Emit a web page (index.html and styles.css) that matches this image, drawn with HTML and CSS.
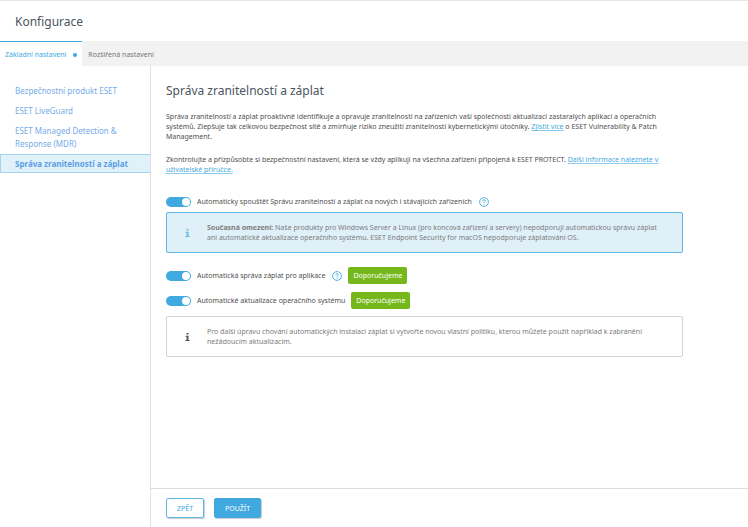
FILE: index.html
```
<!DOCTYPE html>
<html lang="cs">
    <head>
        <meta charset="utf-8" />
        <title>Konfigurace</title>
        <link rel="stylesheet" href="styles.css">
    </head>

    <body>
        <header class="header">
            <h1>Konfigurace</h1>
        </header>

        <nav class="tabs">
            <a href="#" class="tab active">Základní nastavení <span class="dot"></span></a>
            <a href="#" class="tab">Rozšířená nastavení</a>
        </nav>

        <div class="main">
            <nav class="sidebar">
                <a href="#">Bezpečnostní produkt ESET</a>
                <a href="#">ESET LiveGuard</a>
                <a href="#">ESET Managed Detection &amp; Response (MDR)</a>
                <a href="#" class="selected">Správa zranitelností a záplat</a>
            </nav>

            <div class="panel">
                <main class="content">
                    <h2>Správa zranitelností a záplat</h2>
                    <p>Správa zranitelností a záplat proaktivně identifikuje a opravuje zranitelnosti na zařízeních vaší společnosti aktualizací zastaralých aplikací a operačních<br>systémů. Zlepšuje tak celkovou bezpečnost sítě a zmírňuje riziko zneužití zranitelností kybernetickými útočníky. <a href="#">Zjistit více</a> o ESET Vulnerability &amp; Patch<br>Management.</p>
                    <p>Zkontrolujte a přizpůsobte si bezpečnostní nastavení, která se vždy aplikují na všechna zařízení připojená k ESET PROTECT. <a href="#">Další informace naleznete v<br>uživatelské příručce.</a></p>

                    <div class="option first">
                        <input type="checkbox" class="switch" id="auto-start" checked>
                        <label for="auto-start">Automaticky spouštět Správu zranitelností a záplat na nových i stávajících zařízeních</label>
                        <button class="help" aria-label="Nápověda">
                            <svg viewBox="0 0 10 10"><circle cx="5" cy="5" r="4.4"/><path d="M3.7 4.1C3.7 2.2 6.4 2.3 6.3 3.9C6.3 4.8 5 4.8 5 6M5 6.9V7.7"/></svg>
                        </button>
                    </div>

                    <div class="info blue">
                        <svg class="info-icon" viewBox="0 0 5 8"><path d="M1.5 0H3.5V1.6H1.5ZM0.5 2.8H3.5V7H4.7V8H0.3V7H1.6V3.8H0.5Z"/></svg>
                        <p><b>Současná omezení:</b> Naše produkty pro Windows Server a Linux (pro koncová zařízení a servery) nepodporují automatickou správu záplat<br>ani automatické aktualizace operačního systému. ESET Endpoint Security for macOS nepodporuje záplatování OS.</p>
                    </div>

                    <div class="option">
                        <input type="checkbox" class="switch" id="auto-apps" checked>
                        <label for="auto-apps">Automatická správa záplat pro aplikace</label>
                        <button class="help" aria-label="Nápověda">
                            <svg viewBox="0 0 10 10"><circle cx="5" cy="5" r="4.4"/><path d="M3.7 4.1C3.7 2.2 6.4 2.3 6.3 3.9C6.3 4.8 5 4.8 5 6M5 6.9V7.7"/></svg>
                        </button>
                        <span class="badge">Doporučujeme</span>
                    </div>
                    <div class="option">
                        <input type="checkbox" class="switch" id="auto-os" checked>
                        <label for="auto-os">Automatické aktualizace operačního systému</label>
                        <span class="badge">Doporučujeme</span>
                    </div>

                    <div class="info">
                        <svg class="info-icon" viewBox="0 0 5 8"><path d="M1.5 0H3.5V1.6H1.5ZM0.5 2.8H3.5V7H4.7V8H0.3V7H1.6V3.8H0.5Z"/></svg>
                        <p>Pro další úpravu chování automatických instalací záplat si vytvořte novou vlastní politiku, kterou můžete použít například k zabránění<br>nežádoucím aktualizacím.</p>
                    </div>
                </main>

                <footer class="footer">
                    <button class="btn">ZPĚT</button>
                    <button class="btn primary">POUŽÍT</button>
                </footer>
            </div>
        </div>
    </body>
</html>
```
FILE: styles.css
```
* {
    box-sizing: border-box;
}
body {
    margin: 0;
    min-height: 100vh;
    display: flex;
    flex-direction: column;
    font-family: "Noto Sans", sans-serif;
    font-size: 7px;
    line-height: 10px;
    color: #505050;
    background-color: white;
}
h1, h2, p {
    margin: 0;
}
a {
    color: #3fa9e0;
}
button {
    font-family: inherit;
    cursor: pointer;
}

/* header */
.header {
    border-top: 1px solid #e6e6e6;
    padding: 13px 15px 11px;
}
h1, h2 {
    font-size: 12px;
    line-height: 16px;
    font-weight: normal;
    color: #4b5560;
}

/* tabs */
.tabs {
    display: flex;
    background-color: #f2f2f2;
}
.tab {
    display: flex;
    align-items: center;
    gap: 7px;
    height: 25px;
    padding: 1px 6px 0;
    border-top: 1px solid #f2f2f2;
    color: #777;
    text-decoration: none;
}
.tab.active {
    background-color: white;
    border-top-color: #3fa9e0;
    color: #3fa9e0;
    padding: 1px 5px 0;
}
.dot {
    width: 4px;
    height: 4px;
    border-radius: 50%;
    background-color: #3fa9e0;
}

.main {
    flex: 1;
    display: flex;
}

/* sidebar */
.sidebar {
    width: 151px;
    flex-shrink: 0;
    border-right: 1px solid #e0e0e0;
    padding-top: 14px;
}
.sidebar a {
    display: block;
    padding: 4px 15px 3px;
    font-size: 8px;
    line-height: 13px;
    color: #76abe8;
    text-decoration: none;
}
.sidebar .selected {
    margin-top: 1px;
    border: 1px solid #a4d5f0;
    border-right: 0;
    padding: 2px 14px;
    background-color: #e1f1fa;
    color: #5a9fe6;
    font-weight: bold;
}

/* content */
.panel {
    flex: 1;
    display: flex;
    flex-direction: column;
}
.content {
    flex: 1;
    padding: 17px 65px 20px 15px;
}
.content > p {
    margin-top: 13px;
}
.content a {
    text-decoration-color: #8ccbec;
    text-decoration-skip-ink: none;
}
.option {
    display: flex;
    align-items: center;
    height: 17px;
    margin-top: 8px;
}
.option.first {
    margin-top: 18px;
}
.switch {
    appearance: none;
    width: 25px;
    height: 10px;
    margin: 0 6px 0 0;
    padding: 1px;
    border-radius: 5px;
    background-color: #bbb;
    cursor: pointer;
}
.switch::before {
    content: "";
    display: block;
    width: 8px;
    height: 8px;
    border-radius: 50%;
    background-color: white;
}
.switch:checked {
    background-color: #3fa9e0;
}
.switch:checked::before {
    margin-left: auto;
}
.help {
    width: 10px;
    height: 10px;
    margin-left: 7px;
    padding: 0;
    border: 0;
    background: none;
}
.help svg {
    display: block;
    fill: none;
    stroke: #3fa9e0;
    stroke-width: 0.9;
}
.badge {
    margin-left: 6px;
    padding: 4px 5px 3px;
    border-radius: 2px;
    background-color: #76b81c;
    color: white;
}

.info {
    display: flex;
    align-items: center;
    min-height: 41px;
    margin-top: 7px;
    padding: 0 18px;
    border: 1px solid #d2d2d2;
    border-radius: 2px;
    color: #7d7d7d;
}
.info.blue {
    margin: 2px 0 14px;
    background-color: #dff0f9;
    border-color: #5db8e6;
}
.info-icon {
    width: 5px;
    height: 8px;
    margin-right: 17px;
    flex-shrink: 0;
    fill: #4b5560;
}
.blue .info-icon {
    fill: #6db9e4;
}

/* footer */
.footer {
    display: flex;
    gap: 10px;
    height: 39px;
    padding: 9px 15px;
    border-top: 1px solid #dcdcdc;
}
.btn {
    height: 20px;
    padding: 0 10px;
    border: 1px solid #5db8e6;
    border-radius: 2px;
    background-color: white;
    color: #3fa9e0;
    font-size: 7px;
    box-shadow: 1px 1px 1px #ccc;
}
.btn.primary {
    background-color: #3fa9e0;
    border-color: #3fa9e0;
    color: white;
}
```
